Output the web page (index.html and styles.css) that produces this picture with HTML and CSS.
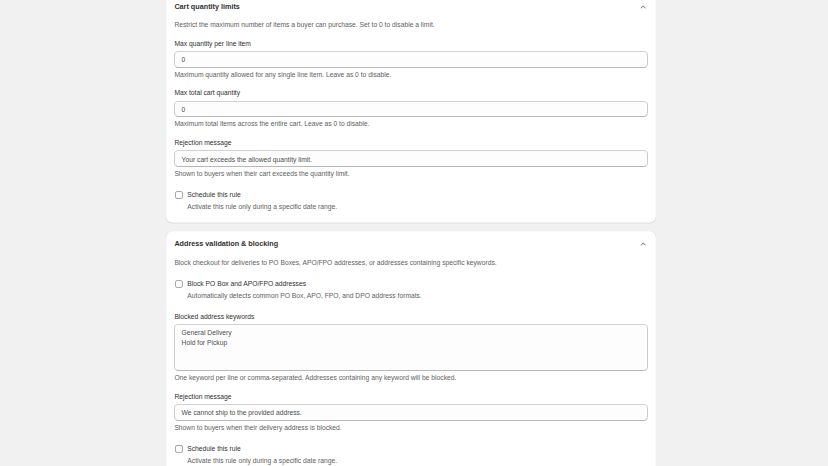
FILE: index.html
```html
<!DOCTYPE html>
<html lang="en">
<head>
<meta charset="utf-8">
<title>Checkout rules</title>
<link rel="stylesheet" href="styles.css">
</head>
<body>
<div class="page">
  <div class="layout">
    <section class="card">
      <div class="card-header">
        <h2 class="card-title">Cart quantity limits</h2>
        <svg class="chevron" viewBox="0 0 20 20" aria-hidden="true"><path d="M14.53 12.28a.75.75 0 0 1-1.06 0l-3.47-3.47-3.470 3.47a.75.75 0 0 1-1.06-1.06l4-4a.75.75 0 0 1 1.06 0l4 4a.75.75 0 0 1 0 1.06Z"/></svg>
      </div>
      <p class="desc">Restrict the maximum number of items a buyer can purchase. Set to 0 to disable a limit.</p>
      <div class="field">
        <label class="label">Max quantity per line item</label>
        <div class="input">0</div>
        <p class="help">Maximum quantity allowed for any single line item. Leave as 0 to disable.</p>
      </div>
      <div class="field">
        <label class="label">Max total cart quantity</label>
        <div class="input">0</div>
        <p class="help">Maximum total items across the entire cart. Leave as 0 to disable.</p>
      </div>
      <div class="field">
        <label class="label">Rejection message</label>
        <div class="input">Your cart exceeds the allowed quantity limit.</div>
        <p class="help">Shown to buyers when their cart exceeds the quantity limit.</p>
      </div>
      <div class="check">
        <div class="check-row"><span class="box"></span><span class="check-label">Schedule this rule</span></div>
        <p class="help check-help">Activate this rule only during a specific date range.</p>
      </div>
    </section>

    <section class="card">
      <div class="card-header">
        <h2 class="card-title">Address validation &amp; blocking</h2>
        <svg class="chevron" viewBox="0 0 20 20" aria-hidden="true"><path d="M14.53 12.28a.75.75 0 0 1-1.06 0l-3.47-3.47-3.47 3.47a.75.75 0 0 1-1.06-1.06l4-4a.75.75 0 0 1 1.06 0l4 4a.75.75 0 0 1 0 1.06Z"/></svg>
      </div>
      <p class="desc">Block checkout for deliveries to PO Boxes, APO/FPO addresses, or addresses containing specific keywords.</p>
      <div class="check">
        <div class="check-row"><span class="box"></span><span class="check-label">Block PO Box and APO/FPO addresses</span></div>
        <p class="help check-help">Automatically detects common PO Box, APO, FPO, and DPO address formats.</p>
      </div>
      <div class="field">
        <label class="label">Blocked address keywords</label>
        <div class="input textarea"><div>General Delivery</div><div>Hold for Pickup</div></div>
        <p class="help">One keyword per line or comma-separated. Addresses containing any keyword will be blocked.</p>
      </div>
      <div class="field">
        <label class="label">Rejection message</label>
        <div class="input">We cannot ship to the provided address.</div>
        <p class="help">Shown to buyers when their delivery address is blocked.</p>
      </div>
      <div class="check">
        <div class="check-row"><span class="box"></span><span class="check-label">Schedule this rule</span></div>
        <p class="help check-help">Activate this rule only during a specific date range.</p>
      </div>
    </section>
  </div>
</div>
</body>
</html>
```
FILE: styles.css
```css
html, body {
  margin: 0;
  padding: 0;
  background: #f1f1f1;
}

body {
  font-family: "Liberation Sans", Arial, sans-serif;
  font-size: 13px;
  line-height: 20px;
  color: #303030;
}

.page {
  zoom: 0.5175;
  display: flow-root;
}

.layout {
  width: 947px;
  margin: -13px 0 0 321px;
  display: flex;
  flex-direction: column;
  gap: 16px;
}

.card {
  background: #ffffff;
  border-radius: 12px;
  padding: 16px;
  display: flex;
  flex-direction: column;
  gap: 16px;
  box-shadow: 0 1px 0 0 rgba(26, 26, 26, 0.07),
    inset 0 -1px 0 0 rgba(0, 0, 0, 0.12),
    inset 1px 0 0 0 rgba(0, 0, 0, 0.06),
    inset -1px 0 0 0 rgba(0, 0, 0, 0.06),
    inset 0 1px 0 0 rgba(0, 0, 0, 0.03);
}

.card-header {
  display: flex;
  align-items: center;
  justify-content: space-between;
  height: 20px;
}

.card-title {
  margin: 0;
  font-size: 14px;
  line-height: 20px;
  font-weight: 700;
  color: #303030;
}

.chevron {
  width: 20px;
  height: 20px;
  fill: #6b6b6b;
  flex: none;
}

.desc {
  margin: 0;
  color: #616161;
}

.field {
  display: flex;
  flex-direction: column;
  gap: 4px;
}

.label {
  display: block;
  color: #303030;
}

.input {
  box-sizing: border-box;
  height: 32px;
  padding: 6px 12px;
  background: #fdfdfd;
  border: 1px solid #cbcbcb;
  border-top-color: #d2d2d2;
  border-bottom-color: #b8b8b8;
  border-radius: 8px;
  color: #4f4f4f;
  line-height: 18px;
}

.textarea {
  height: 91px;
  line-height: 20px;
  padding: 5px 12px;
}

.help {
  margin: 0;
  color: #616161;
}

.check {
  padding: 4px 0;
  display: flex;
  flex-direction: column;
  gap: 4px;
}

.check-row {
  display: flex;
  align-items: center;
  gap: 8px;
}

.box {
  box-sizing: border-box;
  width: 16px;
  height: 16px;
  margin-left: 1px;
  border: 1px solid #a8a8a8;
  border-radius: 4px;
  background: #fdfdfd;
  flex: none;
}

.check-label {
  color: #303030;
}

.check-help {
  padding-left: 25px;
}
```
